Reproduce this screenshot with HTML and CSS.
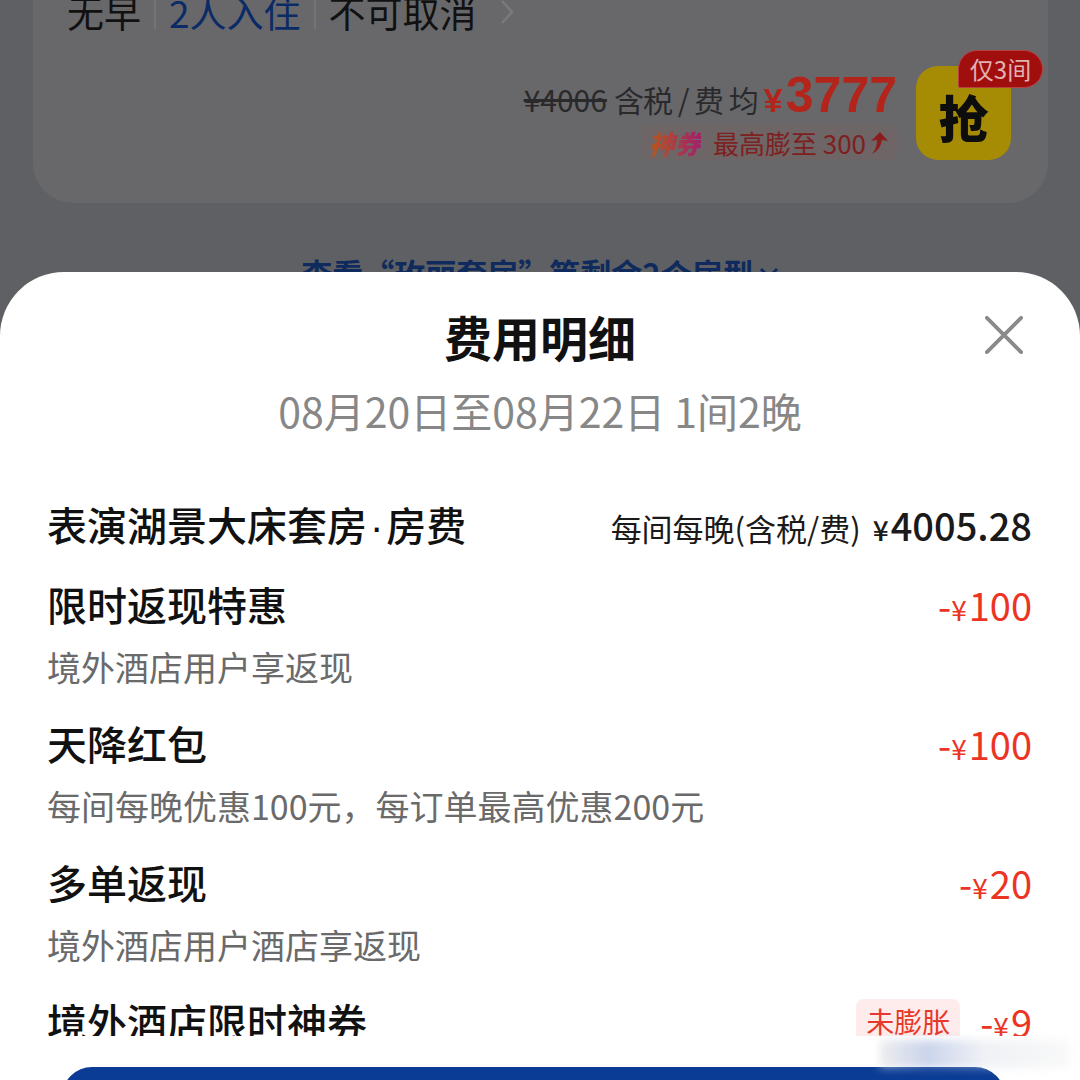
FILE: index.html
```html
<!DOCTYPE html>
<html lang="zh-CN">

<head>
    <meta charset="UTF-8">
    <meta name="viewport" content="width=device-width, initial-scale=1.0">
    <title>费用明细</title>
    <link rel="stylesheet" href="styles.css">
</head>

<body>
    <div class="screen">
        <div class="page">
            <div class="room-card">
                <div class="tags">
                    <span class="tag">无早</span>
                    <span class="sep"></span>
                    <span class="tag blue">2人入住</span>
                    <span class="sep"></span>
                    <span class="tag">不可取消</span>
                    <svg class="chev" width="16" height="28" viewBox="0 0 16 28">
                        <path d="M3 3 L13 14 L3 25" fill="none" stroke="#7a7a7c" stroke-width="2.5" />
                    </svg>
                </div>
                <div class="offer">
                    <div class="price-col">
                        <div class="price-line">
                            <span class="old">¥4006</span>
                            <span class="note">含税 / 费 均</span>
                            <span class="now"><span class="cur">¥</span>3777</span>
                        </div>
                        <div class="coupon">
                            <span class="shen">神券</span>
                            <span class="rise">最高膨至 300</span>
                            <svg width="20" height="24" viewBox="0 0 20 24">
                                <path d="M11 1 L19 10 L13 9 C12 15 9 20 3 23 C7 18 8 14 8 9 L2 10 Z" fill="#8c1d1d" />
                            </svg>
                        </div>
                    </div>
                    <div class="grab">
                        <span>抢</span>
                        <span class="left-badge">仅3间</span>
                    </div>
                </div>
            </div>
            <div class="more-link">
                查看“玫丽套房”等剩余2个房型
                <svg width="22" height="16" viewBox="0 0 22 16">
                    <path d="M3 4 L11 12 L19 4" fill="none" stroke="#0f2a5c" stroke-width="3" />
                </svg>
            </div>
        </div>

        <div class="sheet">
            <div class="sheet-head">
                <div class="title">费用明细</div>
                <div class="dates">08月20日至08月22日 1间2晚</div>
                <svg class="close" width="40" height="40" viewBox="0 0 40 40">
                    <path d="M2 2 L38 38 M38 2 L2 38" stroke="#8a8a8a" stroke-width="4" stroke-linecap="round" />
                </svg>
            </div>

            <div class="items">
                <div class="item">
                    <div class="row">
                        <span class="name">表演湖景大床套房<span class="dot">·</span>房费</span>
                        <span class="base">
                            <span class="per">每间每晚(含税/费)</span>
                            <span class="amount"><span class="yen">¥</span>4005.28</span>
                        </span>
                    </div>
                </div>
                <div class="item">
                    <div class="row">
                        <span class="name">限时返现特惠</span>
                        <span class="minus">-<span class="yen">¥</span>100</span>
                    </div>
                    <div class="desc">境外酒店用户享返现</div>
                </div>
                <div class="item">
                    <div class="row">
                        <span class="name">天降红包</span>
                        <span class="minus">-<span class="yen">¥</span>100</span>
                    </div>
                    <div class="desc">每间每晚优惠100元，每订单最高优惠200元</div>
                </div>
                <div class="item">
                    <div class="row">
                        <span class="name">多单返现</span>
                        <span class="minus">-<span class="yen">¥</span>20</span>
                    </div>
                    <div class="desc">境外酒店用户酒店享返现</div>
                </div>
                <div class="item">
                    <div class="row">
                        <span class="name">境外酒店限时神券</span>
                        <span class="right">
                            <span class="pill">未膨胀</span>
                            <span class="minus">-<span class="yen">¥</span>9</span>
                        </span>
                    </div>
                    <div class="desc">境外酒店用户专享</div>
                </div>
            </div>

            <div class="sheet-foot">
                <div class="blur"></div>
                <div class="submit"></div>
            </div>
        </div>
    </div>
</body>

</html>
```

FILE: styles.css
```css
body {
    margin: 0;
    font-family: "Noto Sans CJK SC", "Noto Sans", sans-serif;
    color: #111;
}

.screen {
    position: relative;
    width: 1080px;
    height: 1080px;
    overflow: hidden;
    background: #5f6064;
}

/* dimmed page behind the sheet */
.page {
    padding: 0 32px 0 33px;
}

.room-card {
    margin-top: -60px;
    padding: 50px 37px 43px 34px;
    background: #68686b;
    border-radius: 40px;
}

.tags {
    display: flex;
    align-items: center;
    height: 44px;
    font-size: 37px;
    line-height: 44px;
}

.tag {
    color: #111;
}

.tag.blue {
    color: #0b2b66;
}

.sep {
    width: 2px;
    height: 34px;
    margin: 0 13px;
    background: #747476;
}

.chev {
    margin-left: 22px;
}

.offer {
    display: flex;
    justify-content: flex-end;
    align-items: flex-start;
    margin-top: 32px;
}

.price-col {
    display: flex;
    flex-direction: column;
    align-items: flex-end;
    padding-top: 3px;
    margin-right: 19px;
}

.price-line {
    display: flex;
    align-items: baseline;
    height: 52px;
    line-height: 52px;
    color: #2a2a2c;
    font-size: 30px;
}

.old {
    text-decoration: line-through;
    margin-right: 7px;
}

.note {
    margin-right: 6px;
    letter-spacing: -1px;
}

.now {
    color: #b3241a;
    font-family: "Liberation Sans", sans-serif;
    font-weight: bold;
    font-size: 50px;
}

.cur {
    font-size: 34px;
    margin-right: 3px;
}

.coupon {
    display: flex;
    align-items: center;
    height: 35px;
    margin-top: 4px;
    padding: 0 8px;
    background: #6e6567;
    border-radius: 6px;
    font-size: 26px;
}

.shen {
    font-weight: 900;
    font-style: italic;
    background: linear-gradient(90deg, #b8581a, #a31f6e);
    -webkit-background-clip: text;
    background-clip: text;
    color: transparent;
    margin-right: 12px;
}

.rise {
    color: #7e2020;
    margin-right: 3px;
}

.grab {
    position: relative;
    width: 95px;
    height: 94px;
    border-radius: 22px;
    background: #a68c05;
    display: flex;
    justify-content: center;
    align-items: center;
    font-size: 50px;
    font-weight: 900;
    color: #0d0d0d;
}

.grab span:first-child {
    margin-top: 6px;
}

.left-badge {
    position: absolute;
    top: -16px;
    right: -32px;
    width: 85px;
    height: 38px;
    box-sizing: border-box;
    border: 1px solid #b84040;
    border-radius: 19px 19px 19px 2px;
    background: #a10e0e;
    color: #e2b2b2;
    font-size: 24px;
    font-weight: normal;
    line-height: 36px;
    text-align: center;
}

.more-link {
    display: flex;
    justify-content: center;
    align-items: center;
    gap: 4px;
    margin-top: 48px;
    line-height: 44px;
    font-size: 31px;
    font-weight: bold;
    color: #0f2a5c;
}

/* bottom sheet */
.sheet {
    position: absolute;
    top: 272px;
    left: 0;
    right: 0;
    bottom: 0;
    background: #fff;
    border-radius: 64px 64px 0 0;
    display: flex;
    flex-direction: column;
}

.sheet-head {
    position: relative;
    padding-top: 32px;
    text-align: center;
}

.title {
    font-size: 48px;
    line-height: 64px;
    font-weight: bold;
    color: #111;
}

.dates {
    margin-top: 16px;
    font-size: 41px;
    line-height: 52px;
    color: #878787;
}

.close {
    position: absolute;
    top: 44px;
    right: 57px;
    width: 38px;
    height: 38px;
}

.items {
    height: 540px;
    flex-shrink: 0;
    overflow: hidden;
    margin-top: 60px;
    padding: 0 48px 0 47px;
    display: flex;
    flex-direction: column;
    gap: 24px;
}

.item {
    flex-shrink: 0;
}

.row {
    display: flex;
    justify-content: space-between;
    align-items: center;
    height: 56px;
}

.name {
    font-size: 40px;
    font-weight: 500;
    color: #111;
}

.dot {
    font-family: "Liberation Sans", sans-serif;
    margin: 0 3px;
}

.base {
    display: flex;
    align-items: baseline;
    color: #1a1a1a;
}

.per {
    font-size: 31px;
    margin-right: 12px;
}

.amount {
    font-size: 38px;
    font-weight: 500;
}

.yen {
    font-size: 28px;
    margin-right: 2px;
}

.minus {
    font-size: 38px;
    color: #ec3424;
}

.right {
    display: flex;
    align-items: center;
}

.pill {
    margin-right: 20px;
    padding: 0 10px;
    height: 44px;
    line-height: 44px;
    border-radius: 8px;
    background: #fdeceb;
    color: #e8382a;
    font-size: 28px;
}

.desc {
    margin-top: 11px;
    font-size: 34px;
    line-height: 48px;
    color: #6a6a6a;
}

.sheet-foot {
    position: relative;
    flex: 1;
    padding-top: 31px;
}

.blur {
    position: absolute;
    top: 4px;
    right: 10px;
    width: 190px;
    height: 28px;
    background: linear-gradient(90deg, rgba(225, 225, 228, 0.6), rgba(150, 170, 215, 0.5) 25%, rgba(225, 228, 235, 0.5) 55%, rgba(235, 235, 235, 0.3));
    filter: blur(4px);
}

.submit {
    height: 80px;
    margin: 0 75px 0 62px;
    border-radius: 30px;
    background: #0b3c95;
}
```
